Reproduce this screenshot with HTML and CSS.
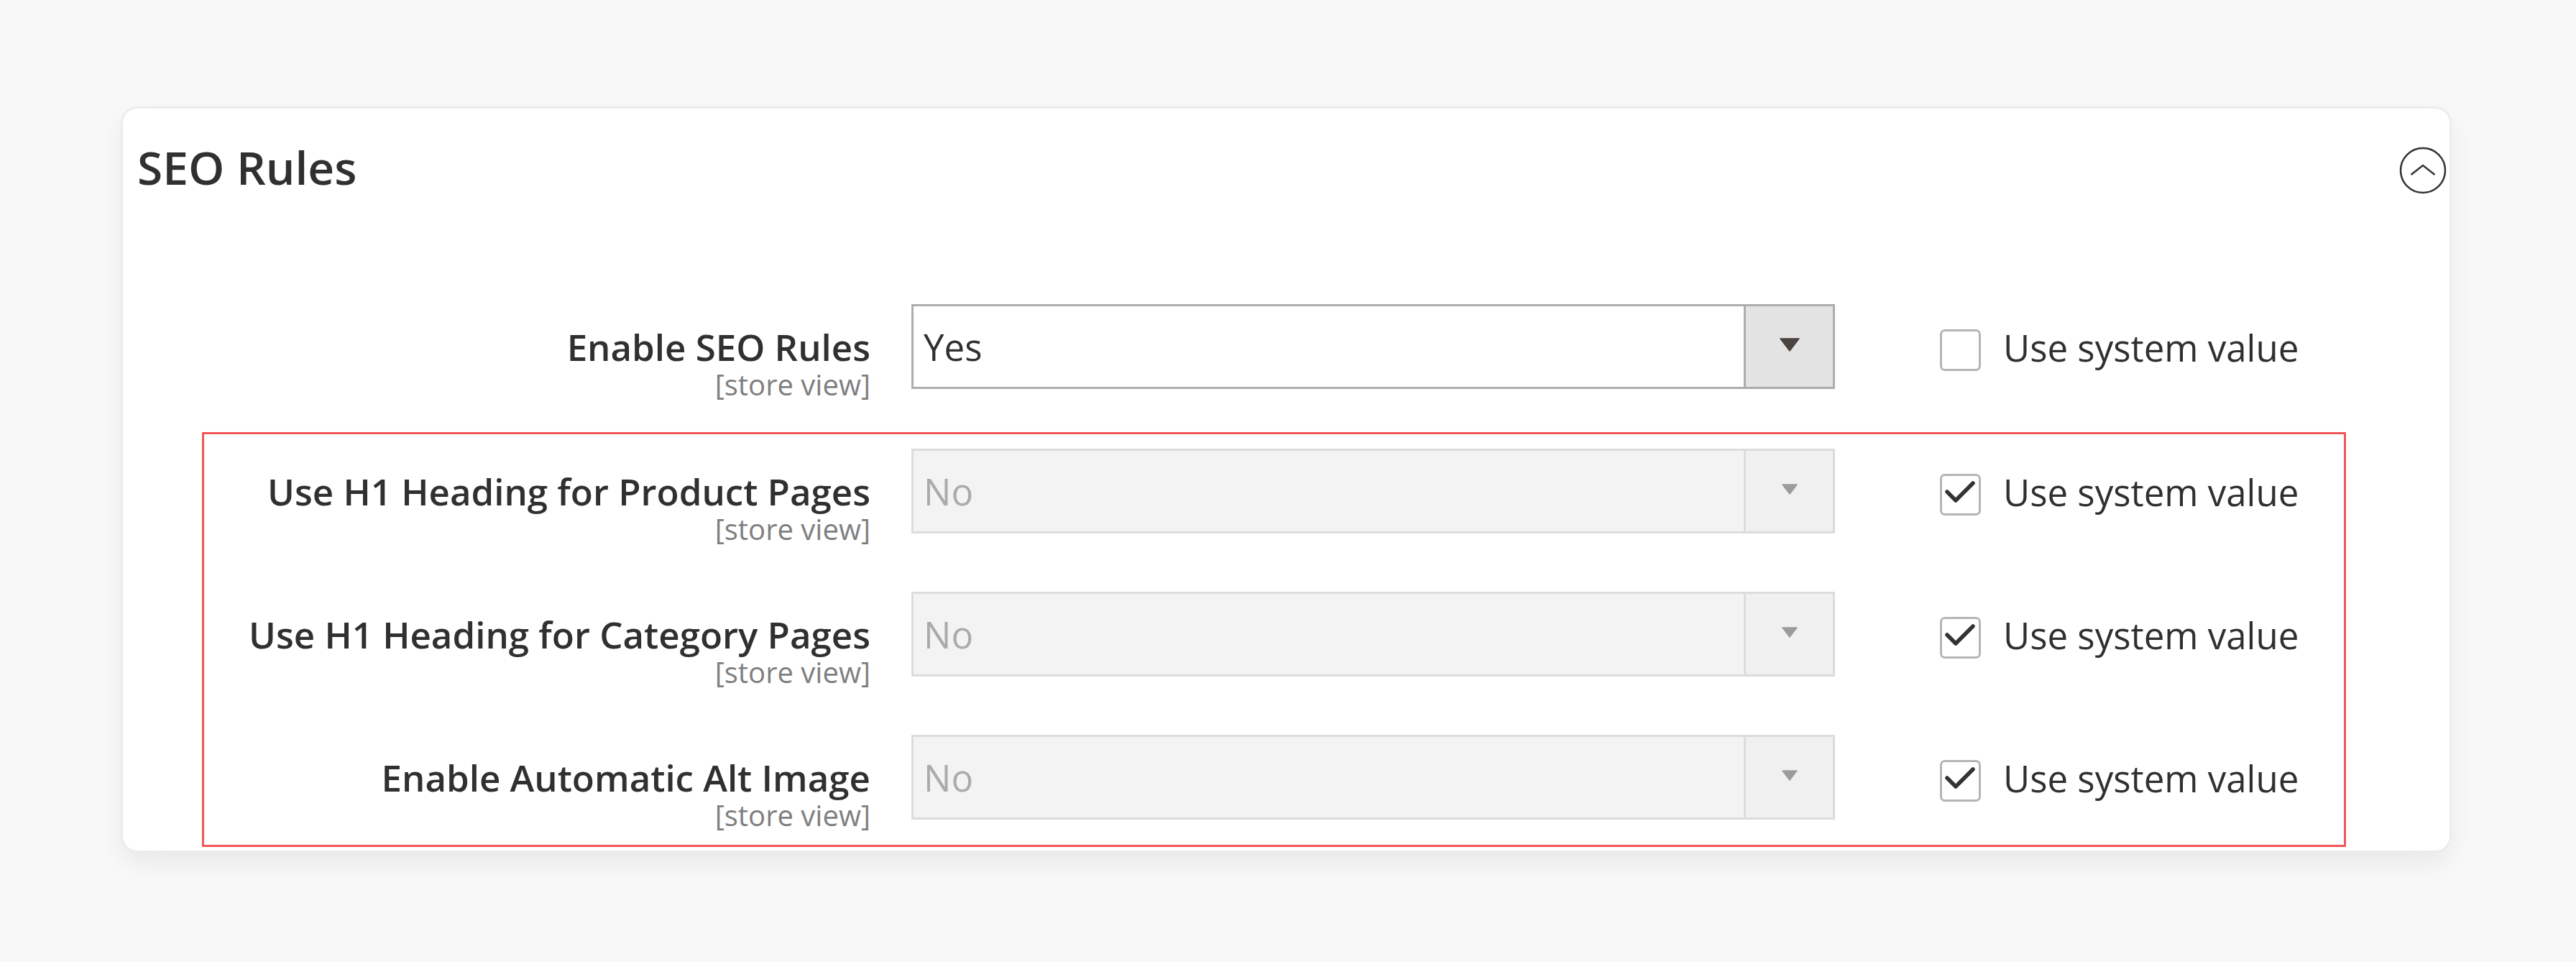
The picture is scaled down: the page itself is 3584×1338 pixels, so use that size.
FILE: index.html
```html
<!DOCTYPE html>
<html lang="en">
<head>
<meta charset="utf-8">
<title>SEO Rules</title>
<link rel="stylesheet" href="styles.css">
</head>
<body>
<section class="card">
  <header class="card-head">
    <h2 class="card-title">SEO Rules</h2>
    <span class="collapse-icon" aria-label="Collapse">
      <svg viewBox="0 0 66 66" width="66" height="66">
        <circle cx="33" cy="33" r="31" fill="none" stroke="#333" stroke-width="2.5"/>
        <polyline points="16.5,39 33,26 49.5,39" fill="none" stroke="#333" stroke-width="2.5" stroke-linejoin="miter"/>
      </svg>
    </span>
  </header>

  <div class="group">
    <div class="row">
      <div class="label">
        <div class="label-text">Enable SEO Rules</div>
        <div class="scope">[store view]</div>
      </div>
      <div class="select">
        <span class="select-value">Yes</span>
        <span class="select-btn">
          <svg viewBox="0 0 28 19" width="28" height="19"><polygon points="1,1 27,1 14,18" fill="#4a4340" stroke="#4a4340" stroke-width="1.5" stroke-linejoin="round"/></svg>
        </span>
      </div>
      <label class="sys">
        <span class="box"></span>
        <span class="sys-text">Use system value</span>
      </label>
    </div>
  </div>

  <div class="group highlight">
    <div class="row">
      <div class="label">
        <div class="label-text">Use H1 Heading for Product Pages</div>
        <div class="scope">[store view]</div>
      </div>
      <div class="select disabled">
        <span class="select-value">No</span>
        <span class="select-btn">
          <svg viewBox="0 0 28 19" width="28" height="19"><polygon points="4,3 24,3 14,16" fill="#9b9b9b" stroke="#9b9b9b" stroke-width="1.5" stroke-linejoin="round"/></svg>
        </span>
      </div>
      <label class="sys">
        <span class="box checked">
          <svg viewBox="0 0 51 52" width="51" height="52"><polyline points="7,22 19,34 43,10" fill="none" stroke="#333" stroke-width="5.5" stroke-linecap="round" stroke-linejoin="round"/></svg>
        </span>
        <span class="sys-text">Use system value</span>
      </label>
    </div>

    <div class="row">
      <div class="label">
        <div class="label-text">Use H1 Heading for Category Pages</div>
        <div class="scope">[store view]</div>
      </div>
      <div class="select disabled">
        <span class="select-value">No</span>
        <span class="select-btn">
          <svg viewBox="0 0 28 19" width="28" height="19"><polygon points="4,3 24,3 14,16" fill="#9b9b9b" stroke="#9b9b9b" stroke-width="1.5" stroke-linejoin="round"/></svg>
        </span>
      </div>
      <label class="sys">
        <span class="box checked">
          <svg viewBox="0 0 51 52" width="51" height="52"><polyline points="7,22 19,34 43,10" fill="none" stroke="#333" stroke-width="5.5" stroke-linecap="round" stroke-linejoin="round"/></svg>
        </span>
        <span class="sys-text">Use system value</span>
      </label>
    </div>

    <div class="row">
      <div class="label">
        <div class="label-text">Enable Automatic Alt Image</div>
        <div class="scope">[store view]</div>
      </div>
      <div class="select disabled">
        <span class="select-value">No</span>
        <span class="select-btn">
          <svg viewBox="0 0 28 19" width="28" height="19"><polygon points="4,3 24,3 14,16" fill="#9b9b9b" stroke="#9b9b9b" stroke-width="1.5" stroke-linejoin="round"/></svg>
        </span>
      </div>
      <label class="sys">
        <span class="box checked">
          <svg viewBox="0 0 51 52" width="51" height="52"><polyline points="7,22 19,34 43,10" fill="none" stroke="#333" stroke-width="5.5" stroke-linecap="round" stroke-linejoin="round"/></svg>
        </span>
        <span class="sys-text">Use system value</span>
      </label>
    </div>
  </div>
</section>
</body>
</html>
```

FILE: styles.css
```css
html, body {
  margin: 0;
  padding: 0;
}

body {
  background: #f8f8f8;
  font-family: "Open Sans", "Noto Sans", "Liberation Sans", sans-serif;
  color: #303030;
  padding: 151px 176px 0 171px;
  min-height: 1338px;
  box-sizing: border-box;
}

.card {
  background: #ffffff;
  border-radius: 20px;
  box-shadow: 0 0 0 3px #ececec, 0 16px 36px rgba(0, 0, 0, 0.07);
  padding: 43px 4px 5px 0;
  height: 1032px;
  box-sizing: border-box;
}

.card-head {
  display: flex;
  align-items: center;
  justify-content: space-between;
  padding-left: 20px;
}

.card-title {
  margin: 0;
  font-size: 64px;
  line-height: 77px;
  font-weight: 600;
  color: #303030;
}

.collapse-icon {
  display: block;
  width: 66px;
  height: 66px;
  margin-top: 8px;
}

.collapse-icon svg {
  display: block;
}

.group {
  margin: 129px 140px 0 110px;
  border: 3px solid transparent;
  padding: 20px 0 18px;
}

.group.highlight {
  margin-top: 22px;
  border-color: #f25757;
  display: flex;
  flex-direction: column;
  gap: 64px;
}

.row {
  display: grid;
  grid-template-columns: 927px 1285px auto;
  column-gap: 57px;
  align-items: start;
}

.label {
  text-align: right;
  padding-top: 30px;
}

.label-text {
  font-size: 51px;
  line-height: 59px;
  font-weight: 600;
  color: #303030;
  white-space: nowrap;
}

.scope {
  font-size: 40px;
  line-height: 46px;
  color: #7f7f7f;
}

.select {
  display: flex;
  height: 118px;
  border: 3px solid #adadad;
  box-sizing: border-box;
  background: #ffffff;
}

.select-value {
  flex: 1;
  display: flex;
  align-items: center;
  padding-left: 14px;
  font-size: 51px;
  line-height: 60px;
  color: #303030;
}

.select-btn {
  width: 121px;
  border-left: 3px solid #adadad;
  background: #e3e3e3;
  display: flex;
  align-items: center;
  justify-content: center;
}

.select-btn svg {
  display: block;
  margin-bottom: 6px;
}

.select.disabled {
  border-color: #dcdcdc;
  background: #f3f3f3;
}

.select.disabled .select-value {
  color: #ababab;
}

.select.disabled .select-btn {
  border-left-color: #dcdcdc;
  background: #f0f0f0;
}

.sys {
  display: flex;
  align-items: center;
  height: 118px;
  padding-top: 9px;
  box-sizing: border-box;
  margin-left: 89px;
}

.box {
  width: 57px;
  height: 58px;
  box-sizing: border-box;
  border: 3px solid #b5b5b5;
  border-radius: 7px;
  background: #ffffff;
  display: flex;
  align-items: center;
  justify-content: center;
}

.box svg {
  display: block;
}

.sys-text {
  margin-left: 31px;
  margin-bottom: 8px;
  font-size: 51px;
  line-height: 60px;
  color: #303030;
  white-space: nowrap;
}
```
